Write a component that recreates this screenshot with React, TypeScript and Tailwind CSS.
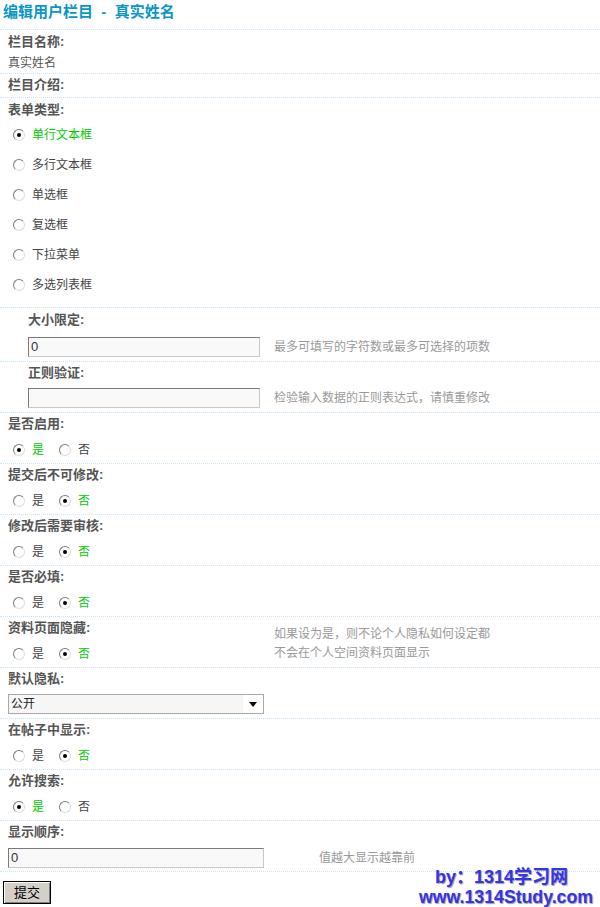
import type { ReactNode } from 'react';

const ROW = 'border-b border-dotted border-[#c6e4f8]';

function Radio({ checked }: { checked?: boolean }) {
  return (
    <span className="relative inline-block w-[12px] h-[12px] shrink-0 rounded-full border border-t-[#7a7a7a] border-l-[#7a7a7a] border-r-[#dddddd] border-b-[#dddddd] bg-white">
      {checked && <span className="absolute left-[3px] top-[3px] w-[4px] h-[4px] rounded-full bg-black" />}
    </span>
  );
}

function Option({ label, checked }: { label: string; checked?: boolean }) {
  return (
    <span className="flex items-center">
      <Radio checked={checked} />
      <span className={checked ? 'ml-[7px] text-[#00cc00]' : 'ml-[7px] text-[#444]'}>{label}</span>
    </span>
  );
}

function Label({ children }: { children: ReactNode }) {
  return <div className="pt-[2px] h-[20px] leading-[18px] text-[13px] font-bold text-[#555]">{children}</div>;
}

function YesNo({ yes }: { yes: boolean }) {
  return (
    <div className="mt-[7px] h-[20px] flex items-center pl-[5px] text-[12px]">
      <Option label="是" checked={yes} />
      <span className="ml-[15px]">
        <Option label="否" checked={!yes} />
      </span>
    </div>
  );
}

function TextBox({ value, width }: { value?: string; width: string }) {
  return (
    <div
      className={
        width +
        ' h-[20px] border border-t-[#7a7a7a] border-l-[#7a7a7a] border-r-[#c8c8c8] border-b-[#c8c8c8] bg-[#f9f9f9] pl-[2px] text-[13px] leading-[18px] text-[#333]'
      }
    >
      {value}
    </div>
  );
}

const forms = ['单行文本框', '多行文本框', '单选框', '复选框', '下拉菜单', '多选列表框'];

const switches: [string, boolean][] = [
  ['是否启用:', true],
  ['提交后不可修改:', false],
  ['修改后需要审核:', false],
  ['是否必填:', false],
];

export default function App() {
  return (
    <div className="relative w-[600px] h-[907px] overflow-hidden bg-white font-['Liberation_Sans','Noto_Sans_CJK_SC',sans-serif] text-[12px] text-[#555]">
      <div className={'h-[30px] pl-[3px] pt-[3px] ' + ROW}>
        <div className="leading-[18px] text-[15px] font-bold text-[#0a96c8] whitespace-pre">编辑用户栏目  -  真实姓名</div>
      </div>

      <div className={'h-[44px] pl-[8px] pt-[1px] ' + ROW}>
        <Label>栏目名称:</Label>
        <div className="mt-[3px] leading-[18px] text-[#555]">真实姓名</div>
      </div>

      <div className={'h-[24px] pl-[8px] ' + ROW}>
        <Label>栏目介绍:</Label>
      </div>

      <div className={'h-[210px] pl-[8px] pt-[1px] ' + ROW}>
        <Label>表单类型:</Label>
        <div className="pl-[5px] mt-[1px]">
          {forms.map((f, i) => (
            <div key={f} className="h-[30px] flex items-center">
              <Option label={f} checked={i === 0} />
            </div>
          ))}
        </div>
      </div>

      <div className={'h-[54px] pl-[28px] pt-[1px] ' + ROW}>
        <Label>大小限定:</Label>
        <div className="mt-[8px] flex items-center">
          <TextBox value="0" width="w-[232px]" />
          <span className="ml-[14px] text-[#999]">最多可填写的字符数或最多可选择的项数</span>
        </div>
      </div>

      <div className={'h-[51px] pl-[28px] ' + ROW}>
        <Label>正则验证:</Label>
        <div className="mt-[6px] flex items-center">
          <TextBox width="w-[232px]" />
          <span className="ml-[14px] text-[#999]">检验输入数据的正则表达式，请慎重修改</span>
        </div>
      </div>

      {switches.map(([label, yes]) => (
        <div key={label} className={'h-[51px] pl-[8px] ' + ROW}>
          <Label>{label}</Label>
          <YesNo yes={yes} />
        </div>
      ))}

      <div className={'h-[51px] pl-[8px] flex ' + ROW}>
        <div className="w-[266px]">
          <Label>资料页面隐藏:</Label>
          <YesNo yes={false} />
        </div>
        <div className="pt-[8px] leading-[19px] text-[#999]">
          <div>如果设为是，则不论个人隐私如何设定都</div>
          <div>不会在个人空间资料页面显示</div>
        </div>
      </div>

      <div className={'h-[51px] pl-[8px] ' + ROW}>
        <Label>默认隐私:</Label>
        <div className="mt-[6px] w-[256px] h-[20px] flex border border-[#a8a8a8] bg-white">
          <div className="flex-1 bg-[#f6f6f6] pl-[2px] leading-[18px] text-[12px] text-[#222]">公开</div>
          <div className="w-[20px] flex items-center justify-center">
            <svg width="8" height="5" viewBox="0 0 8 5">
              <path d="M0 0H8L4 5Z" fill="#000" />
            </svg>
          </div>
        </div>
      </div>

      {([['在帖子中显示:', false], ['允许搜索:', true]] as [string, boolean][]).map(([label, yes]) => (
        <div key={label} className={'h-[51px] pl-[8px] ' + ROW}>
          <Label>{label}</Label>
          <YesNo yes={yes} />
        </div>
      ))}

      <div className={'h-[51px] pl-[8px] ' + ROW}>
        <Label>显示顺序:</Label>
        <div className="mt-[7px] flex items-center">
          <TextBox value="0" width="w-[256px]" />
          <span className="ml-[55px] text-[#999]">值越大显示越靠前</span>
        </div>
      </div>

      <div className="pl-[3px] pt-[9px]">
        <button className="w-[48px] h-[23px] border border-black bg-[#d4d0c8] shadow-[inset_1px_1px_0_#ffffff,inset_-1px_-1px_0_#808080] text-[13px] leading-[20px] text-black">
          提交
        </button>
      </div>

      <div className="absolute left-[435px] top-[867px] text-[18px] font-bold leading-[20px] text-[#3434ee] [text-shadow:1px_1px_1px_#9a9a9a]">
        by：1314学习网
      </div>
      <div className="absolute left-[419px] top-[887px] text-[17.7px] font-bold leading-[20px] text-[#3434ee] [text-shadow:1px_1px_1px_#9a9a9a]">
        www.1314Study.com
      </div>
    </div>
  );
}
